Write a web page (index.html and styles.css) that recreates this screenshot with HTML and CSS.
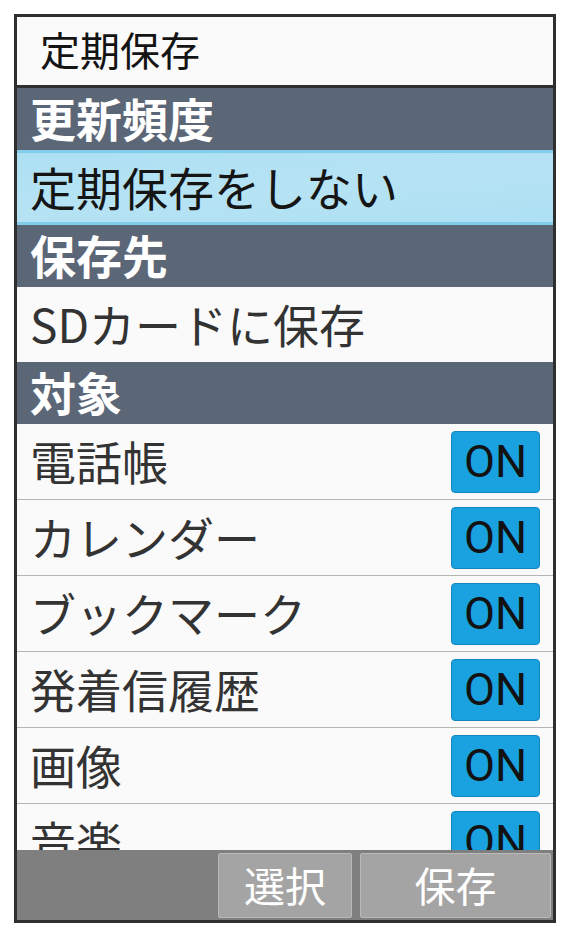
FILE: index.html
```html
<!DOCTYPE html>
<html lang="ja">
<head>
<meta charset="utf-8">
<title>定期保存</title>
<link rel="stylesheet" href="styles.css">
</head>
<body>
<div class="frame">
  <div class="list">
    <div class="title">定期保存</div>
    <div class="section">更新頻度</div>
    <div class="item selected">定期保存をしない</div>
    <div class="section">保存先</div>
    <div class="item">SDカードに保存</div>
    <div class="section">対象</div>
    <div class="item toggle"><span class="label">電話帳</span><span class="on">ON</span></div>
    <div class="item toggle"><span class="label">カレンダー</span><span class="on">ON</span></div>
    <div class="item toggle"><span class="label">ブックマーク</span><span class="on">ON</span></div>
    <div class="item toggle"><span class="label">発着信履歴</span><span class="on">ON</span></div>
    <div class="item toggle"><span class="label">画像</span><span class="on">ON</span></div>
    <div class="item toggle"><span class="label">音楽</span><span class="on">ON</span></div>
  </div>
  <div class="bar">
    <div class="softkey key-select">選択</div>
    <div class="softkey key-save">保存</div>
  </div>
</div>
</body>
</html>
```

FILE: styles.css
```css
html, body {
  margin: 0;
  padding: 0;
  background: #ffffff;
}

body {
  font-family: "Noto Sans CJK JP", "Noto Sans", sans-serif;
}

.frame {
  margin: 14px 0 0 14px;
  width: 536px;
  height: 903px;
  border: 3px solid #2f2f2f;
  display: flex;
  flex-direction: column;
  background: #fafafa;
}

.list {
  height: 833px;
  overflow: hidden;
  flex: none;
}

.title {
  height: 71px;
  box-sizing: border-box;
  border-bottom: 3px solid #2f2f2f;
  background: #fafafa;
  color: #141414;
  font-size: 40px;
  padding-left: 23px;
  padding-bottom: 4px;
  display: flex;
  align-items: center;
  line-height: 1;
}

.section {
  height: 62px;
  box-sizing: border-box;
  background: #5b6677;
  color: #ffffff;
  font-weight: bold;
  font-size: 46px;
  padding-left: 13px;
  padding-bottom: 4px;
  display: flex;
  align-items: center;
  line-height: 1;
}

.item {
  height: 75px;
  box-sizing: border-box;
  background: #fafafa;
  color: #333333;
  font-size: 46px;
  padding-left: 13px;
  padding-bottom: 3px;
  display: flex;
  align-items: center;
  line-height: 1;
}

.selected {
  background: linear-gradient(175deg, #ade0f3 0%, #b6e3f4 50%, #ade0f3 100%);
  border-top: 3px solid #7fcdeb;
  border-bottom: 3px solid #7fcdeb;
  color: #151515;
}

.toggle {
  height: 76px;
  border-bottom: 1px solid #b5b5b5;
  justify-content: space-between;
  padding-right: 13px;
  padding-bottom: 0;
}

.toggle .label {
  margin-bottom: 3px;
}

.on {
  width: 89px;
  height: 62px;
  box-sizing: border-box;
  background: #19a2df;
  border: 1px solid #1388bf;
  border-radius: 4px;
  color: #121212;
  font-family: Roboto, "Noto Sans", sans-serif;
  font-size: 45px;
  display: flex;
  align-items: center;
  justify-content: center;
  line-height: 1;
}

.bar {
  height: 70px;
  box-sizing: border-box;
  background: #7f7f7f;
  display: flex;
  justify-content: flex-end;
  gap: 8px;
  padding: 3px 2px 2px 0;
  flex: none;
}

.softkey {
  box-sizing: border-box;
  background: #a5a4a4;
  border: 1px solid #bababa;
  border-radius: 2px;
  color: #ffffff;
  font-size: 41px;
  padding-bottom: 3px;
  display: flex;
  align-items: center;
  justify-content: center;
  line-height: 1;
}

.key-select {
  width: 134px;
}

.key-save {
  width: 191px;
}
```
